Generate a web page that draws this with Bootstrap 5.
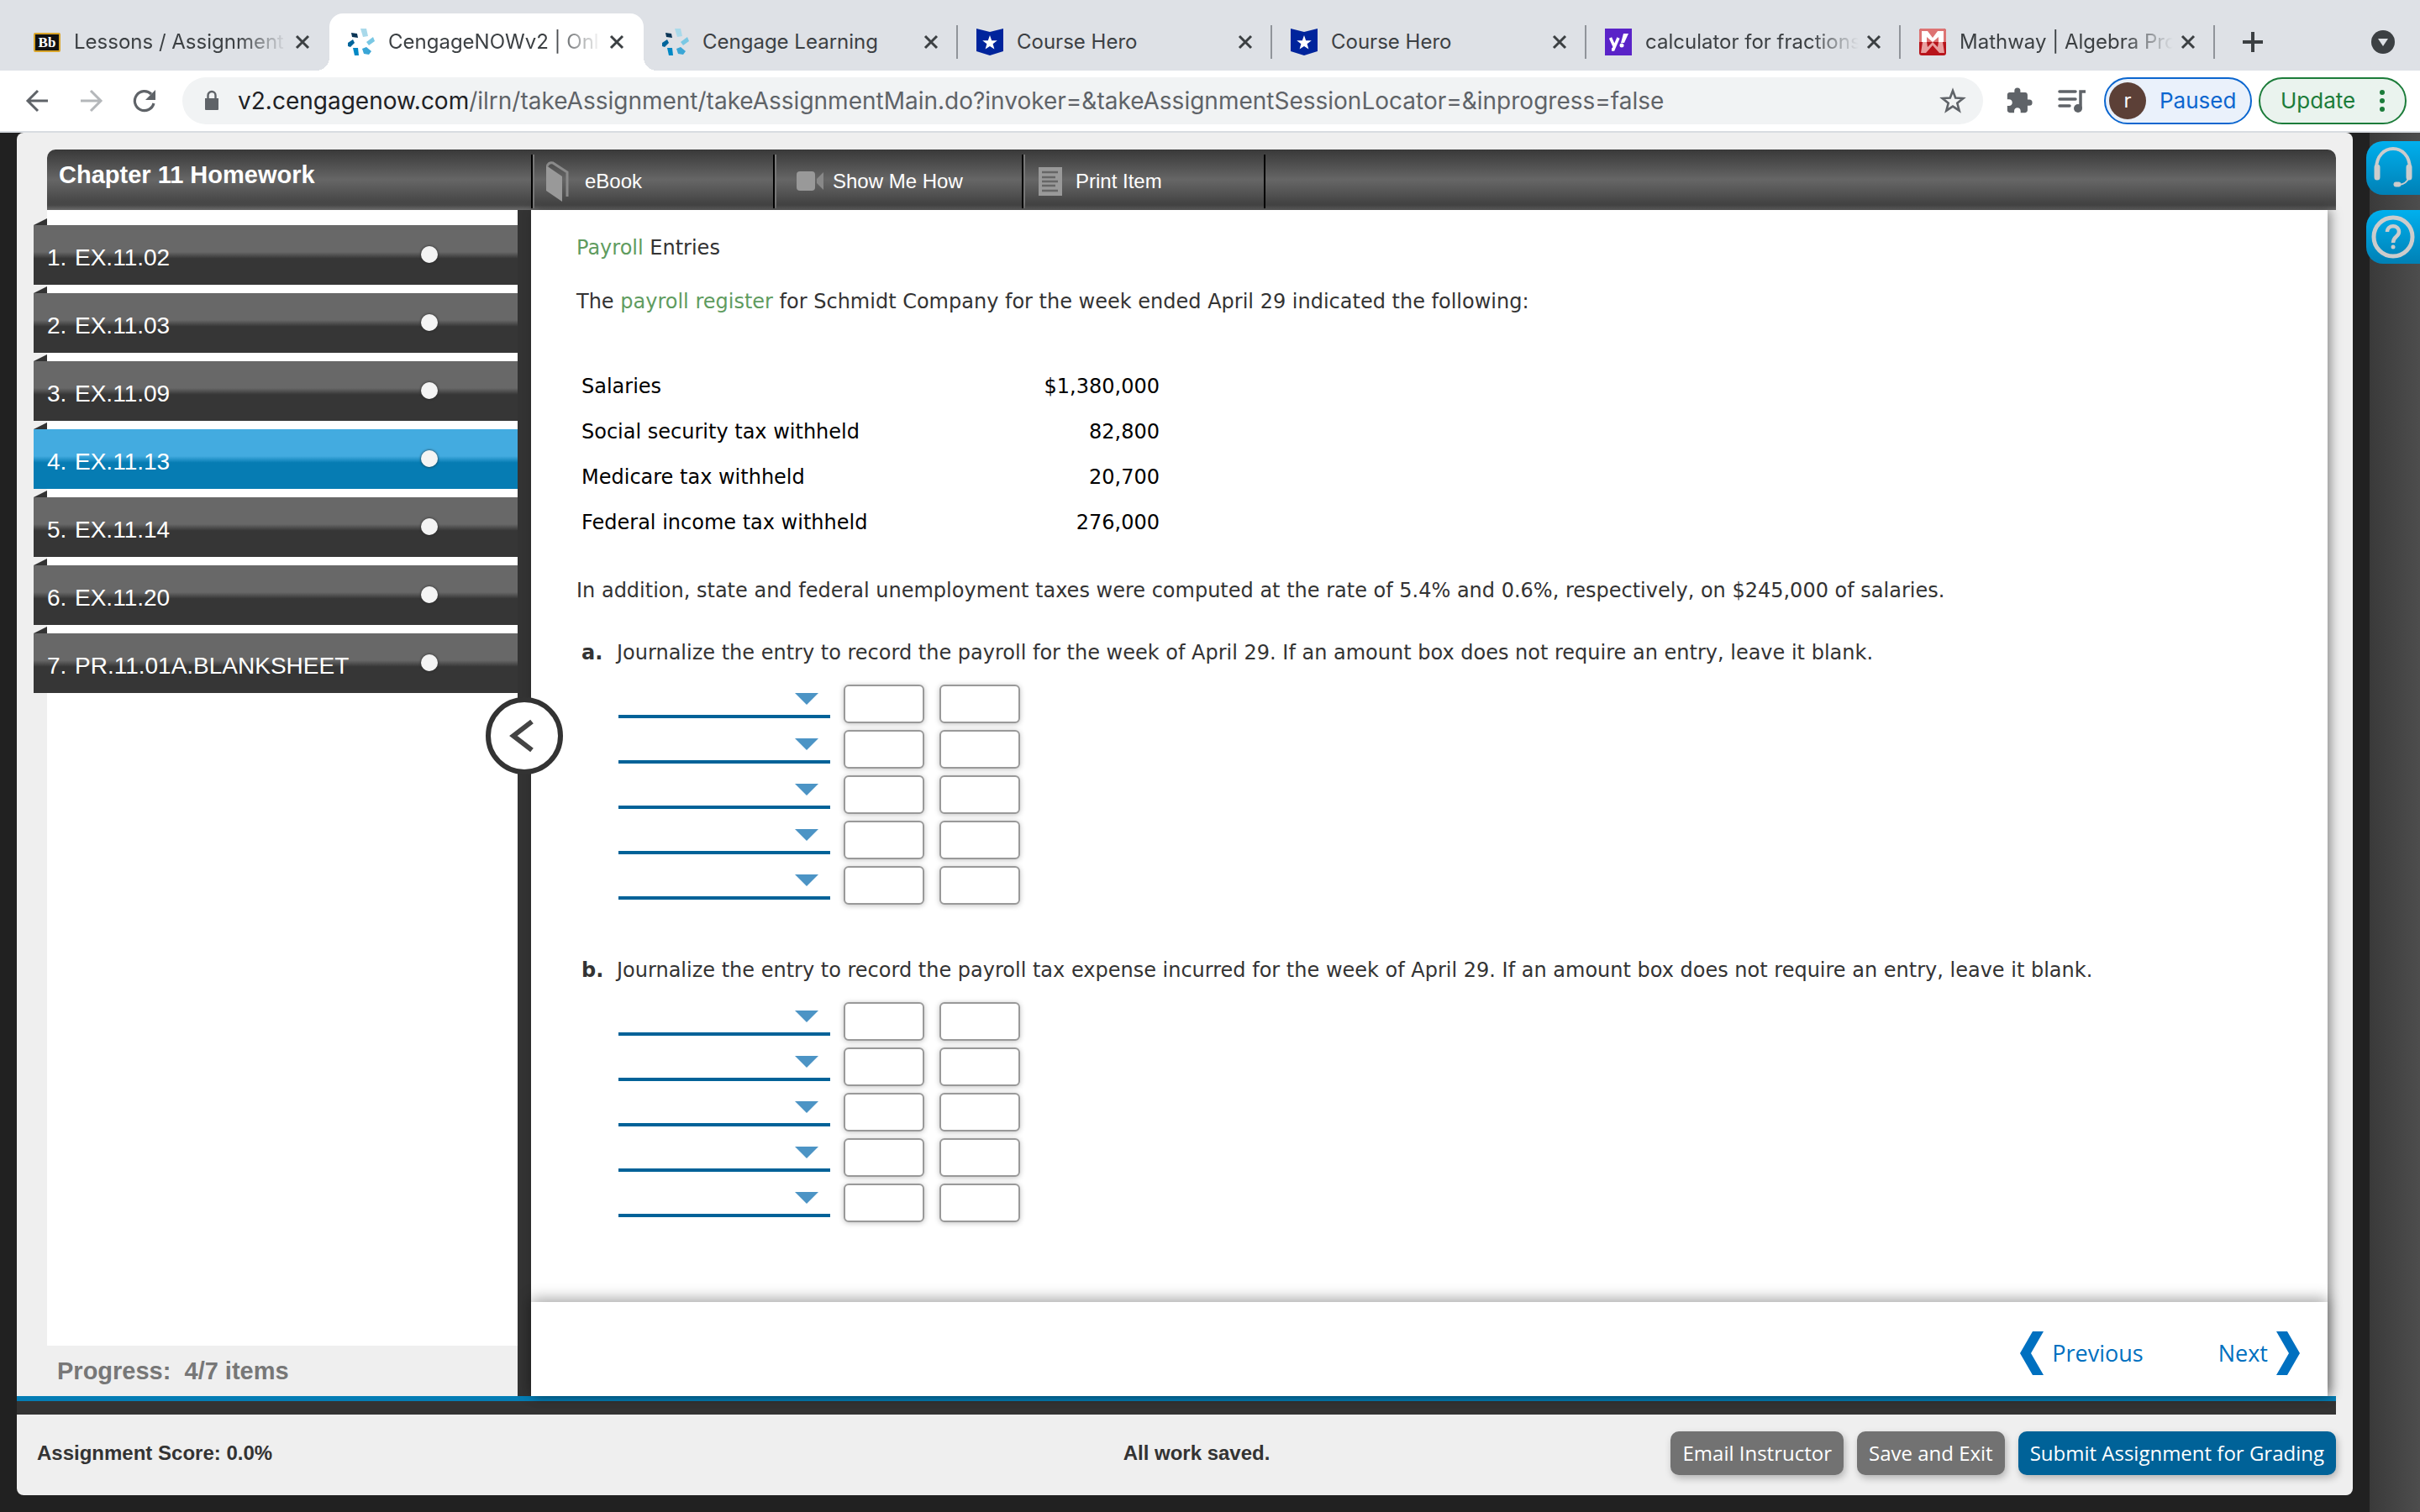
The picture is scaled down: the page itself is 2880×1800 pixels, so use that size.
<!DOCTYPE html>
<html lang="en">
<head>
<meta charset="utf-8">
<title>CengageNOWv2 | Online teaching and learning</title>
<link href="https://cdn.jsdelivr.net/npm/bootstrap@5.3.0/dist/css/bootstrap.min.css" rel="stylesheet">
<style>
body{background:#212121;color:#333;font-family:"Liberation Sans",Arial,sans-serif;font-size:24px;line-height:32px;overflow:hidden}
button{border:0;background:none;padding:0;color:inherit}
svg{display:block;flex:none}
a{text-decoration:none}
.chrome{font-family:Inter,"Noto Sans",sans-serif;color:#3c4043}
.tabstrip{height:84px;background:#dee1e6;padding:16px 30px 0 18px}
.tab{flex:0 1 374px;height:68px;padding:0 23px 0 22px;min-width:0;position:relative}
.tab svg.fav{width:32px;height:32px;margin-right:16px}
.tab-title{flex:1;min-width:0;white-space:nowrap;overflow:hidden;font-size:24px;margin-right:4px}
.tab-title.fade-end{-webkit-mask-image:linear-gradient(90deg,#000 76%,transparent 98%);mask-image:linear-gradient(90deg,#000 76%,transparent 98%)}
.tab.divided::after{content:"";position:absolute;right:0;top:14px;width:2px;height:40px;background:#90949a}
.tab.active-tab{background:#fff;border-radius:16px 16px 0 0}
.tab.active-tab::before,.tab.active-tab::after{content:"";position:absolute;bottom:0;width:16px;height:16px}
.tab.active-tab::before{left:-16px;background:radial-gradient(circle at 0 0,transparent 16px,#fff 16px)}
.tab.active-tab::after{right:-16px;background:radial-gradient(circle at 100% 0,transparent 16px,#fff 16px)}
.toolbar{height:74px;background:#fff;border-bottom:2px solid #d8dce1;padding:0 16px 0 28px}
.omnibox{background:#f1f3f4;border-radius:28px;height:56px;padding:0 20px 0 24px;margin:0 26px 0 29px;gap:20px}
.media{margin:0 20px 0 28px}
.url{font-size:28px;color:#5f6368;flex:1;white-space:nowrap;min-width:0}
.url b{font-weight:400;color:#202124}
.pill{height:56px;border-radius:28px;border:2px solid;font-size:26px}
.pill.paused{color:#0b66cf;background:#eaf1fb;width:176px;padding-left:4px;gap:16px}
.pill.update{color:#1c7c3a;background:#eaf3ee;width:176px;padding:0 24px}
.avatar{width:44px;height:44px;border-radius:50%;background:#5c4037;color:#fff;font-size:24px}
.stage{min-height:0;padding-left:20px}
.frame{background:#efefef;border-radius:8px;padding-top:20px;margin-bottom:20px;min-width:0}
.topbar{height:72px;margin:0 20px 0 36px;color:#fff;border-radius:10px 10px 0 0;background:linear-gradient(#393939,#4f4f4f 25%,#666 50%,#474747 86%,#474747 92%,#6a6a6a)}
.course{width:576px;padding:14px;font-size:29px;font-weight:700;line-height:32px;margin:0}
.tool{height:64px;margin-top:6px;border-left:2px solid #000;box-shadow:inset 2px 0 #777;color:#fff;font-size:24px}
.tool.ebook{width:288px;padding-left:16px;gap:18px}
.tool.show{width:296px;padding-left:26px;gap:10px}
.tool.print{width:290px;padding-left:18px;gap:16px;border-right:2px solid #000}
.work{margin:0 20px 0 36px;min-height:0}
.side{width:560px;background:#fff;flex:none}
.items{padding:18px 0 0;margin:0 0 0 -16px;gap:10px}
.item{height:71px;background:linear-gradient(#686868 45%,#363636 56%);color:#fff;font-size:28px;padding:6px 95px 0 16px;position:relative;text-align:left}
.item.current{background:linear-gradient(#43abe0 45%,#067cb3 56%)}
.item::before{content:"";position:absolute;left:0;top:-8px;border-left:16px solid transparent;border-bottom:8px solid #333}
.item span:first-child{width:33px}
.dot{width:20px;height:20px;border-radius:50%;background:radial-gradient(#f4f4f4 60%,#ddd);margin-bottom:8px;box-shadow:0 0 3px #222}
.progress-note{height:60px;background:#efefef;color:#777;font-weight:700;font-size:29px;padding-left:12px;white-space:pre}
.splitter{width:16px;background:#333;flex:none;position:relative}
.collapse-btn{position:absolute;left:-38px;top:580px;width:92px;height:92px;border:6px solid #333;border-radius:50%;background:#fff;z-index:3;padding-right:8px}
.pane{flex:1;min-width:0;background:#fff;margin-right:10px;box-shadow:4px 0 12px rgba(0,0,0,.4);z-index:1}
.question{padding:29px 54px 0;font-family:Verdana,"DejaVu Sans",sans-serif}
.question p{margin:0 0 32px}
.term{color:#5f9c5f}
.facts{margin:58px 0 38px 6px;color:#000;width:688px}
.facts td,.facts th{padding:0;height:54px;font-weight:400}
.question .addition{margin-bottom:42px}
.part{gap:18px;margin-left:6px}
.part b{width:24px}
.journal{margin:18px 0 0 50px}
.journal + .part{margin-top:58px}
.journal td{padding:0 18px 0 0;height:54px;vertical-align:middle}
.journal td:first-child{padding-right:16px;vertical-align:top}
.acct{appearance:none;display:block;width:252px;height:44px;border:0;border-bottom:4px solid #006298;border-radius:0;background:#fff url("data:image/svg+xml,%3Csvg xmlns='http://www.w3.org/2000/svg' width='28' height='14'%3E%3Cpath fill='%234c94c5' d='M0 0h28L14 14z'/%3E%3C/svg%3E") no-repeat 210px 14px}
.amount{display:block;width:96px;height:46px;border:2px solid #999;border-radius:6px;background:#fff;box-shadow:0 1px 6px rgba(0,0,0,.25)}
.pager{height:112px;padding:10px 32px 0 0;box-shadow:0 -4px 16px rgba(0,0,0,.35);background:#fff;font-family:"Open Sans",sans-serif;font-size:27px}
.pager a{color:#0070c0;gap:9px}
.previous{margin-right:89px}
.base{margin-right:20px;height:22px;background:#333;border-top:6px solid #047db5}
.foot{height:96px;padding:0 20px 4px 24px;font-weight:700}
.act{height:52px;border-radius:10px;color:#fff;background:#727272;font-family:"Open Sans",sans-serif;font-size:24px;padding:0 14px;box-shadow:2px 4px 8px rgba(0,0,0,.25)}
.act.submit{background:#006298}
.rail{width:80px;border-left:20px solid #212121;background:linear-gradient(90deg,#3a3a3a,#4d4d4d);padding-top:10px;gap:18px}
.help{width:64px;height:64px;margin-left:-4px;border-radius:20px 0 0 20px;background:linear-gradient(#00b0ee,#0080b5)}
</style>
</head>
<body>
<svg width="0" height="0" class="position-absolute"><defs>
<symbol id="close" viewBox="0 0 18 18"><path d="M2 2l14 14M16 2L2 16" stroke="#3c4043" stroke-width="3"/></symbol>
<symbol id="cengage" viewBox="0 0 32 32"><path fill="#a9d9ea" d="M15 0h7l2 9-6 1z"/><path fill="#7ac8e4" d="M30 10l2 5-7 5-3-4z"/><path fill="#3aa6d6" d="M17 24l5-2 6 5-3 4-6-1z"/><path fill="#0088c5" d="M6 23h6l1 9H8z"/><path fill="#00659b" d="M0 17l6-4 2 4-5 5-3-1z"/><path fill="#0a3556" d="M4 5l7 1 1 5-7-1z"/></symbol>
<symbol id="hero" viewBox="0 0 32 32"><path fill="#00249c" d="M0 0l16 4L32 0v27l-16 5-16-5z"/><path fill="#fff" d="M16 8l2.200 6.200 6.600.1-5.200 4 1.800 6.300-5.400-3.700-5.400 3.700 1.800-6.300-5.200-4 6.600-.1z"/></symbol>
</defs></svg>
<div class="vh-100 d-flex flex-column">
<header class="chrome">
  <div class="tabstrip d-flex align-items-center">
    <div class="tab d-flex align-items-center"><svg class="fav" viewBox="0 0 32 32"><rect x="1" y="6" width="30" height="21" rx="1" fill="#111" stroke="#d9a52a" stroke-width="2"/><text x="16" y="22" font-family="Liberation Serif" font-size="17" font-weight="700" fill="#fff" text-anchor="middle">Bb</text></svg><span class="tab-title fade-end">Lessons / Assignment</span><button aria-label="Close tab"><svg width="18" height="18"><use href="#close"/></svg></button></div>
    <div class="tab active-tab d-flex align-items-center"><svg class="fav"><use href="#cengage"/></svg><span class="tab-title fade-end">CengageNOWv2 | Onl</span><button aria-label="Close tab"><svg width="18" height="18"><use href="#close"/></svg></button></div>
    <div class="tab divided d-flex align-items-center"><svg class="fav"><use href="#cengage"/></svg><span class="tab-title">Cengage Learning</span><button aria-label="Close tab"><svg width="18" height="18"><use href="#close"/></svg></button></div>
    <div class="tab divided d-flex align-items-center"><svg class="fav"><use href="#hero"/></svg><span class="tab-title">Course Hero</span><button aria-label="Close tab"><svg width="18" height="18"><use href="#close"/></svg></button></div>
    <div class="tab divided d-flex align-items-center"><svg class="fav"><use href="#hero"/></svg><span class="tab-title">Course Hero</span><button aria-label="Close tab"><svg width="18" height="18"><use href="#close"/></svg></button></div>
    <div class="tab divided d-flex align-items-center"><svg class="fav" viewBox="0 0 32 32"><path fill="#5a23c8" d="M0 0h32v32H0z"/><path d="M6.500 11l4.500 10m5-10l-6 14H8" stroke="#fff" stroke-width="3.500" fill="none"/><path fill="#fff" d="M22 6h6l-5 11h-4z"/><circle cx="20" cy="20" r="2.500" fill="#fff"/></svg><span class="tab-title fade-end">calculator for fractions</span><button aria-label="Close tab"><svg width="18" height="18"><use href="#close"/></svg></button></div>
    <div class="tab divided d-flex align-items-center"><svg class="fav" viewBox="0 0 32 32"><rect width="32" height="32" rx="3" fill="#b8141b"/><path fill="#dd7474" d="M3 0h26a3 3 0 013 3v13H0V3a3 3 0 013-3z"/><path fill="#fff" d="M3 16V3h7l6 8 6-8h7v13h-6V10l-7 6-7-6v6z"/><path fill="#e9a0a0" d="M4 16h5l1 6 6-6 6 6 1-6h5l2 13h-6l-8-9-8 9H2z"/></svg><span class="tab-title fade-end">Mathway | Algebra Pro</span><button aria-label="Close tab"><svg width="18" height="18"><use href="#close"/></svg></button></div>
    <button class="ms-4 ps-2" aria-label="New tab"><svg width="26" height="26"><path d="M13 1v24M1 13h24" stroke="#3c4043" stroke-width="4"/></svg></button>
    <button class="ms-auto" aria-label="Search tabs"><svg width="28" height="28"><circle cx="14" cy="14" r="14" fill="#3c4043"/><path d="M8 10h12l-6 9z" fill="#dee1e6"/></svg></button>
  </div>
  <div class="toolbar d-flex align-items-center">
    <button aria-label="Back"><svg width="32" height="32" fill="none" stroke="#5f6368" stroke-width="3"><path d="M29 16H5M17 4L5 16l12 12"/></svg></button>
    <button class="ms-4 ps-2" aria-label="Forward"><svg width="32" height="32" fill="none" stroke="#b4b7ba" stroke-width="3"><path d="M4 16h23M16 4l12 12-12 12"/></svg></button>
    <button class="ms-4 ps-2" aria-label="Reload"><svg width="32" height="32" fill="none"><path d="M27 19a11.500 11.500 0 11-3-11" stroke="#5f6368" stroke-width="3.200"/><path d="M29 3v12H17z" fill="#5f6368"/></svg></button>
    <div class="omnibox d-flex align-items-center flex-grow-1">
      <svg width="22" height="26"><path d="M3 10h16v13a1 1 0 01-1 1H4a1 1 0 01-1-1z" fill="#5f6368"/><path d="M6.500 10V6.500a4.500 4.500 0 019 0V10" fill="none" stroke="#5f6368" stroke-width="2.400"/></svg>
      <div class="url"><b>v2.cengagenow.com</b>/ilrn/takeAssignment/takeAssignmentMain.do?invoker=&amp;takeAssignmentSessionLocator=&amp;inprogress=false</div>
      <button aria-label="Bookmark this page"><svg width="32" height="32"><path d="M16 4l3.200 8.500 9.200.5-7.100 5.800 2.400 8.900L16 22.600l-7.700 5.100 2.400-8.900L3.600 13l9.200-.5z" fill="none" stroke="#5f6368" stroke-width="2.600"/></svg></button>
    </div>
    <button aria-label="Extensions"><svg width="34" height="34" viewBox="0 0 24 24"><path fill="#5f6368" d="M20.500 11H19V7c0-1.100-.9-2-2-2h-4V3.500a2.500 2.500 0 00-5 0V5H4c-1.100 0-2 .9-2 2v3.800h1.500c1.500 0 2.700 1.200 2.700 2.700S5 16.200 3.500 16.200H2V20c0 1.100.9 2 2 2h3.800v-1.500c0-1.500 1.200-2.700 2.700-2.700s2.700 1.200 2.700 2.700V22H17c1.100 0 2-.9 2-2v-4h1.500a2.500 2.500 0 000-5z"/></svg></button>
    <button class="media" aria-label="Media controls"><svg width="36" height="32"><path d="M3 5h19M3 14h19M3 22h12" stroke="#5f6368" stroke-width="3.500" stroke-linecap="round"/><path d="M34 5h-6v20" stroke="#5f6368" stroke-width="3.500" fill="none"/><circle cx="25" cy="25" r="5" fill="#5f6368"/></svg></button>
    <button class="pill paused d-flex align-items-center me-2"><span class="avatar d-flex align-items-center justify-content-center">r</span>Paused</button>
    <button class="pill update d-flex align-items-center justify-content-between">Update<svg width="6" height="28" fill="#1c7c3a"><circle cx="3" cy="4" r="3"/><circle cx="3" cy="14" r="3"/><circle cx="3" cy="24" r="3"/></svg></button>
  </div>
</header>
<div class="stage d-flex flex-grow-1">
  <div class="frame d-flex flex-column flex-grow-1">
    <div class="topbar d-flex">
      <h1 class="course">Chapter 11 Homework</h1>
      <button class="tool ebook d-flex align-items-center"><svg width="28" height="50" viewBox="0 0 28 50"><path fill="#999" d="M0 6l19 13v30L0 36z"/><path d="M1 7q2-5 7-4l17 11v29" fill="none" stroke="#8a8a8a" stroke-width="3"/></svg>eBook</button>
      <button class="tool show d-flex align-items-center"><svg width="33" height="24"><rect width="22" height="23" rx="4" fill="#999"/><path fill="#888" d="M32 1v21l-8-8V9z"/></svg>Show Me How</button>
      <button class="tool print d-flex align-items-center"><svg width="28" height="34"><path fill="#999" d="M0 0h28v34H0z"/><path d="M4 6h19M4 12h16M4 17h19M4 22h16M4 28h19" stroke="#666" stroke-width="2.500"/></svg>Print Item</button>
    </div>
    <div class="work d-flex flex-grow-1">
      <nav class="side d-flex flex-column">
        <div class="items d-flex flex-column flex-grow-1">
          <a href="#" class="item d-flex align-items-center"><span>1.</span><span class="flex-grow-1">EX.11.02</span><i class="dot"></i></a>
          <a href="#" class="item d-flex align-items-center"><span>2.</span><span class="flex-grow-1">EX.11.03</span><i class="dot"></i></a>
          <a href="#" class="item d-flex align-items-center"><span>3.</span><span class="flex-grow-1">EX.11.09</span><i class="dot"></i></a>
          <a href="#" class="item current d-flex align-items-center"><span>4.</span><span class="flex-grow-1">EX.11.13</span><i class="dot"></i></a>
          <a href="#" class="item d-flex align-items-center"><span>5.</span><span class="flex-grow-1">EX.11.14</span><i class="dot"></i></a>
          <a href="#" class="item d-flex align-items-center"><span>6.</span><span class="flex-grow-1">EX.11.20</span><i class="dot"></i></a>
          <a href="#" class="item d-flex align-items-center"><span>7.</span><span class="flex-grow-1">PR.11.01A.BLANKSHEET</span><i class="dot"></i></a>
        </div>
        <div class="progress-note d-flex align-items-center">Progress:  4/7 items</div>
      </nav>
      <div class="splitter"><button class="collapse-btn d-flex align-items-center justify-content-center" aria-label="Collapse list"><svg width="36" height="40"><path d="M31 3L9 20l22 17" fill="none" stroke="#444" stroke-width="6"/></svg></button></div>
      <main class="pane d-flex flex-column">
        <div class="question flex-grow-1">
          <p><a href="#" class="term">Payroll</a> Entries</p>
          <p>The <a href="#" class="term">payroll register</a> for Schmidt Company for the week ended April 29 indicated the following:</p>
          <table class="facts">
            <tr><th scope="row">Salaries</th><td class="text-end">$1,380,000</td></tr>
            <tr><th scope="row">Social security tax withheld</th><td class="text-end">82,800</td></tr>
            <tr><th scope="row">Medicare tax withheld</th><td class="text-end">20,700</td></tr>
            <tr><th scope="row">Federal income tax withheld</th><td class="text-end">276,000</td></tr>
          </table>
          <p class="addition">In addition, state and federal unemployment taxes were computed at the rate of 5.4% and 0.6%, respectively, on $245,000 of salaries.</p>
          <div class="part d-flex"><b>a.</b><span>Journalize the entry to record the payroll for the week of April 29. If an amount box does not require an entry, leave it blank.</span></div>
          <table class="journal">
            <tr><td><select class="acct" aria-label="Account"><option></option></select></td><td><input class="amount" aria-label="Debit"></td><td><input class="amount" aria-label="Credit"></td></tr>
            <tr><td><select class="acct" aria-label="Account"><option></option></select></td><td><input class="amount" aria-label="Debit"></td><td><input class="amount" aria-label="Credit"></td></tr>
            <tr><td><select class="acct" aria-label="Account"><option></option></select></td><td><input class="amount" aria-label="Debit"></td><td><input class="amount" aria-label="Credit"></td></tr>
            <tr><td><select class="acct" aria-label="Account"><option></option></select></td><td><input class="amount" aria-label="Debit"></td><td><input class="amount" aria-label="Credit"></td></tr>
            <tr><td><select class="acct" aria-label="Account"><option></option></select></td><td><input class="amount" aria-label="Debit"></td><td><input class="amount" aria-label="Credit"></td></tr>
          </table>
          <div class="part d-flex"><b>b.</b><span>Journalize the entry to record the payroll tax expense incurred for the week of April 29. If an amount box does not require an entry, leave it blank.</span></div>
          <table class="journal">
            <tr><td><select class="acct" aria-label="Account"><option></option></select></td><td><input class="amount" aria-label="Debit"></td><td><input class="amount" aria-label="Credit"></td></tr>
            <tr><td><select class="acct" aria-label="Account"><option></option></select></td><td><input class="amount" aria-label="Debit"></td><td><input class="amount" aria-label="Credit"></td></tr>
            <tr><td><select class="acct" aria-label="Account"><option></option></select></td><td><input class="amount" aria-label="Debit"></td><td><input class="amount" aria-label="Credit"></td></tr>
            <tr><td><select class="acct" aria-label="Account"><option></option></select></td><td><input class="amount" aria-label="Debit"></td><td><input class="amount" aria-label="Credit"></td></tr>
            <tr><td><select class="acct" aria-label="Account"><option></option></select></td><td><input class="amount" aria-label="Debit"></td><td><input class="amount" aria-label="Credit"></td></tr>
          </table>
        </div>
        <div class="pager d-flex align-items-center justify-content-end">
          <a href="#" class="previous d-flex align-items-center"><svg width="30" height="52"><path fill="#0070c0" d="M16 0h13L14 26l15 26H16L1 26z"/></svg>Previous</a>
          <a href="#" class="d-flex align-items-center">Next<svg width="30" height="52"><path fill="#0070c0" d="M14 0H1l15 26L1 52h13l15-26z"/></svg></a>
        </div>
      </main>
    </div>
    <div class="base"></div>
    <footer class="foot row g-0 align-items-center">
      <div class="col">Assignment Score: 0.0%</div>
      <div class="col text-center ps-4">All work saved.</div>
      <div class="col d-flex justify-content-end gap-3"><button class="act">Email Instructor</button><button class="act">Save and Exit</button><button class="act submit">Submit Assignment for Grading</button></div>
    </footer>
  </div>
  <aside class="rail d-flex flex-column">
    <button class="help d-flex align-items-center justify-content-center" aria-label="Support"><svg width="54" height="54" fill="none" stroke="#ccc"><path d="M7 28C7-4 47-4 47 28" stroke-width="4"/><path d="M8 26v12M46 26v12" stroke-width="7" stroke-linecap="round"/><path d="M46 38q-3 8-12 9" stroke-width="2"/><rect x="28" y="44" width="8" height="5" rx="2" fill="#ccc"/></svg></button>
    <button class="help d-flex align-items-center justify-content-center" aria-label="Help"><svg width="54" height="54" fill="none" stroke="#ccc"><circle cx="27" cy="27" r="23" stroke-width="5"/><path d="M20 21c0-9 14-9 14 0 0 6-7 5-7 13" stroke-width="4.500"/><circle cx="27" cy="39" r="2.500" fill="#ccc" stroke="none"/></svg></button>
  </aside>
</div>
</div>
<script src="https://cdn.jsdelivr.net/npm/bootstrap@5.3.0/dist/js/bootstrap.bundle.min.js"></script>
</body>
</html>
